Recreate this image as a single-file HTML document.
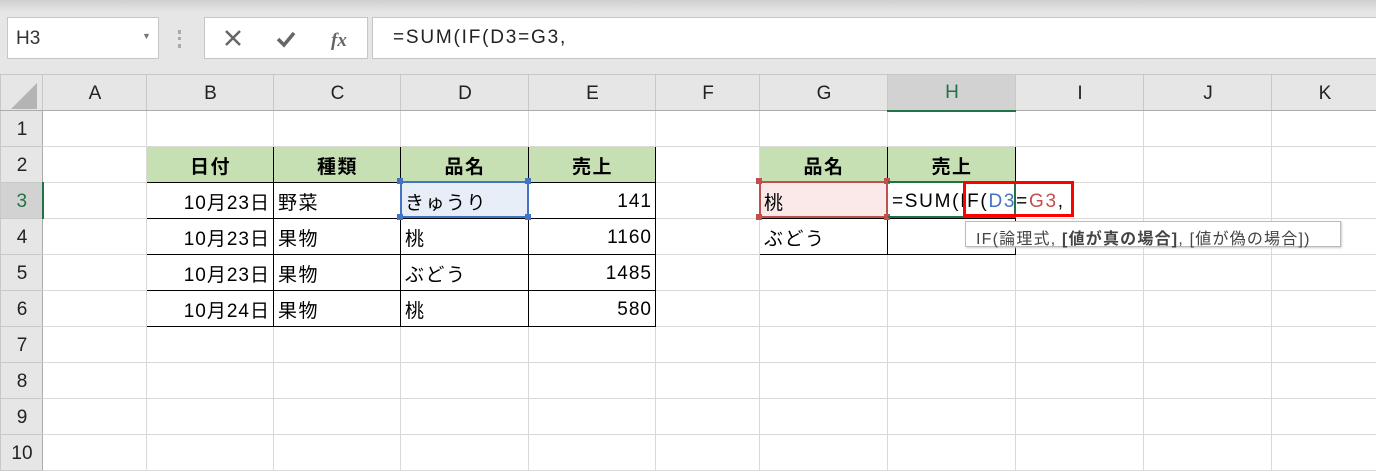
<!DOCTYPE html><html><head><meta charset="utf-8"><style>
*{margin:0;padding:0;box-sizing:border-box}
body{width:1376px;height:470px;overflow:hidden;background:#fff;font-family:"Liberation Sans","Noto Sans CJK JP",sans-serif;position:relative;color:#000}
.top{position:absolute;left:0;top:0;width:1376px;height:74px;background:linear-gradient(#d0d0d0,#e6e6e6 12px,#e6e6e6)}
.box{position:absolute;background:#fff;border:1px solid #c6c6c6}
table{position:absolute;left:0;top:74px;border-collapse:collapse;table-layout:fixed;width:1377px}
td{border:1px solid #d9d9d9;height:36px;font-size:19px;padding:2px 3px 0 4px;white-space:nowrap;overflow:visible;letter-spacing:1.5px}
tr.h td{background:#e6e6e6;text-align:center;color:#222;border-color:#c8c8c8;border-bottom:1px solid #ababab;letter-spacing:0}
td.r{background:#e6e6e6;text-align:center;color:#222;border-color:#c8c8c8;border-right:1px solid #ababab;letter-spacing:0}
td.b{border:1px solid #000}
td.g{background:#c6e0b4;font-weight:bold;text-align:center}
td.n{text-align:right;padding-right:3px;letter-spacing:1px}
.ov{position:absolute}
</style></head><body>
<div class="top"></div>
<div class="box" style="left:7px;top:17px;width:152px;height:42px;font-size:19px;color:#333;padding:10px 0 0 8px">H3<span style="position:absolute;left:134px;top:13px;font-size:9px;color:#777">▼</span></div>
<div class="ov" style="left:178px;top:30px;width:4px;height:18px;border-left:3px dotted #aaa"></div>
<div class="box" style="left:204px;top:17px;width:164px;height:42px">
<svg width="164" height="42"><path d="M21 13l14 14M35 13l-14 14" stroke="#666" stroke-width="2.5"/><path d="M73 21l6 6 10-12" stroke="#666" stroke-width="3.5" fill="none"/><text x="126" y="28" font-family="Liberation Serif" font-style="italic" font-weight="bold" font-size="19" fill="#666">fx</text></svg></div>
<div class="box" style="left:372px;top:17px;width:1010px;height:42px;font-size:19px;color:#222;padding:9px 0 0 20px;letter-spacing:1.8px">=SUM(IF(D3=G3,</div>
<table>
<colgroup><col style="width:42px"><col style="width:104px"><col style="width:127px"><col style="width:127px"><col style="width:128px"><col style="width:127px"><col style="width:104px"><col style="width:128px"><col style="width:128px"><col style="width:128px"><col style="width:128px"><col style="width:106px"></colgroup>
<tr class="h"><td style="position:relative"><svg style="position:absolute;left:10px;top:8px" width="26" height="26"><path d="M26 0V26H0Z" fill="#b4b4b4"/></svg></td><td>A</td><td>B</td><td>C</td><td>D</td><td>E</td><td>F</td><td>G</td><td style="background:#d2d2d2;border-bottom:2px solid #217346;color:#217346">H</td><td>I</td><td>J</td><td>K</td></tr>
<tr><td class="r">1</td><td></td><td></td><td></td><td></td><td></td><td></td><td></td><td></td><td></td><td></td><td></td></tr>
<tr><td class="r">2</td><td></td><td class="b g">日付</td><td class="b g">種類</td><td class="b g">品名</td><td class="b g">売上</td><td></td><td class="b g">品名</td><td class="b g">売上</td><td></td><td></td><td></td></tr>
<tr><td class="r" style="background:#d2d2d2;border-right:2px solid #217346;color:#217346">3</td><td></td><td class="b n">10月23日</td><td class="b">野菜</td><td class="b" style="background:#e8eef8">きゅうり</td><td class="b n">141</td><td></td><td class="b" style="background:#fbe9e9">桃</td><td class="b" style="letter-spacing:1.7px">=SUM(IF(<span style="color:#4472c4">D3</span>=<span style="color:#c0504d">G3</span>,</td><td></td><td></td><td></td></tr>
<tr><td class="r">4</td><td></td><td class="b n">10月23日</td><td class="b">果物</td><td class="b">桃</td><td class="b n">1160</td><td></td><td class="b">ぶどう</td><td class="b"></td><td></td><td></td><td></td></tr>
<tr><td class="r">5</td><td></td><td class="b n">10月23日</td><td class="b">果物</td><td class="b">ぶどう</td><td class="b n">1485</td><td></td><td></td><td></td><td></td><td></td><td></td></tr>
<tr><td class="r">6</td><td></td><td class="b n">10月24日</td><td class="b">果物</td><td class="b">桃</td><td class="b n">580</td><td></td><td></td><td></td><td></td><td></td><td></td></tr>
<tr><td class="r">7</td><td></td><td></td><td></td><td></td><td></td><td></td><td></td><td></td><td></td><td></td><td></td></tr>
<tr><td class="r">8</td><td></td><td></td><td></td><td></td><td></td><td></td><td></td><td></td><td></td><td></td><td></td></tr>
<tr><td class="r">9</td><td></td><td></td><td></td><td></td><td></td><td></td><td></td><td></td><td></td><td></td><td></td></tr>
<tr><td class="r">10</td><td></td><td></td><td></td><td></td><td></td><td></td><td></td><td></td><td></td><td></td><td></td></tr>
</table>
<div class="ov" style="left:400px;top:181px;width:129px;height:37px;border:2px solid #4472c4"></div>
<div class="ov" style="left:397px;top:178px;width:6px;height:6px;background:#4472c4"></div><div class="ov" style="left:525px;top:178px;width:6px;height:6px;background:#4472c4"></div><div class="ov" style="left:397px;top:214px;width:6px;height:6px;background:#4472c4"></div><div class="ov" style="left:525px;top:214px;width:6px;height:6px;background:#4472c4"></div>
<div class="ov" style="left:759px;top:181px;width:129px;height:37px;border:2px solid #c0504d"></div>
<div class="ov" style="left:756px;top:178px;width:6px;height:6px;background:#c0504d"></div><div class="ov" style="left:884px;top:178px;width:6px;height:6px;background:#c0504d"></div><div class="ov" style="left:756px;top:214px;width:6px;height:6px;background:#c0504d"></div><div class="ov" style="left:884px;top:214px;width:6px;height:6px;background:#c0504d"></div>
<div class="ov" style="left:888px;top:181px;width:128px;height:37px;border:2px solid #217346;border-left:none"></div>
<div class="ov" style="left:963px;top:181px;width:111px;height:36px;border:3px solid #f00"></div>
<div class="ov" style="left:965px;top:221px;width:376px;height:26px;background:#fff;border:1px solid #bbb;box-shadow:1px 1px 2px #ccc;font-size:16px;color:#444;padding:3px 0 0 10px;white-space:nowrap;letter-spacing:1.2px">IF(論理式, <b>[値が真の場合]</b>, [値が偽の場合])</div>
</body></html>
